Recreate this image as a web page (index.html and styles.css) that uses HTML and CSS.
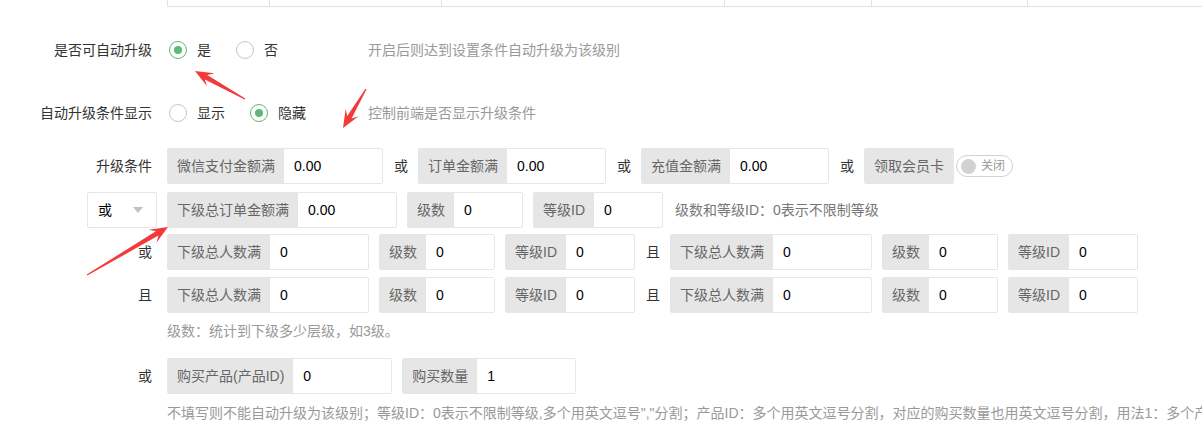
FILE: index.html
```html
<!DOCTYPE html>
<html>
<head>
    <meta charset="utf-8">
    <title>会员等级 - 自动升级设置</title>
    <link rel="stylesheet" href="styles.css">
</head>
<body>
    <div class="page">
        <!-- 上面等级列表的底边 -->
        <div class="tbl-tail">
            <span class="tbl-tail__cell tbl-tail__cell--1"></span>
            <span class="tbl-tail__cell tbl-tail__cell--2"></span>
            <span class="tbl-tail__cell tbl-tail__cell--3"></span>
            <span class="tbl-tail__cell tbl-tail__cell--4"></span>
            <span class="tbl-tail__cell tbl-tail__cell--5"></span>
        </div>

        <div class="form-item form-item--auto">
            <label class="form-label">是否可自动升级</label>
            <div class="radios">
                <span class="radio radio--on"><i class="radio__icon"></i>是</span>
                <span class="radio"><i class="radio__icon"></i>否</span>
            </div>
            <div class="form-tip">开启后则达到设置条件自动升级为该级别</div>
        </div>

        <div class="form-item form-item--show">
            <label class="form-label">自动升级条件显示</label>
            <div class="radios">
                <span class="radio"><i class="radio__icon"></i>显示</span>
                <span class="radio radio--on"><i class="radio__icon"></i>隐藏</span>
            </div>
            <div class="form-tip">控制前端是否显示升级条件</div>
        </div>

        <div class="cond cond--first">
            <label class="form-label">升级条件</label>
            <div class="ig"><span class="ig__addon">微信支付金额满</span><input class="ig__input" value="0.00"></div>
            <span class="conj">或</span>
            <div class="ig"><span class="ig__addon">订单金额满</span><input class="ig__input" value="0.00"></div>
            <span class="conj">或</span>
            <div class="ig"><span class="ig__addon">充值金额满</span><input class="ig__input" value="0.00"></div>
            <span class="conj">或</span>
            <div class="ig"><span class="ig__addon">领取会员卡</span></div>
            <div class="switch">关闭</div>
        </div>

        <div class="cond cond--team">
            <div class="form-label form-label--sel">
                <div class="sel">或</div>
            </div>
            <div class="ig"><span class="ig__addon">下级总订单金额满</span><input class="ig__input" value="0.00"></div>
            <div class="ig"><span class="ig__addon">级数</span><input class="ig__input ig__input--sm" value="0"></div>
            <div class="ig"><span class="ig__addon">等级ID</span><input class="ig__input ig__input--sm" value="0"></div>
            <span class="cond__tip">级数和等级ID：0表示不限制等级</span>
        </div>

        <div class="cond cond--people">
            <label class="form-label">或</label>
            <div class="ig"><span class="ig__addon">下级总人数满</span><input class="ig__input" value="0"></div>
            <div class="ig"><span class="ig__addon">级数</span><input class="ig__input ig__input--sm" value="0"></div>
            <div class="ig"><span class="ig__addon">等级ID</span><input class="ig__input ig__input--sm" value="0"></div>
            <span class="conj">且</span>
            <div class="ig"><span class="ig__addon">下级总人数满</span><input class="ig__input" value="0"></div>
            <div class="ig"><span class="ig__addon">级数</span><input class="ig__input ig__input--sm" value="0"></div>
            <div class="ig"><span class="ig__addon">等级ID</span><input class="ig__input ig__input--sm" value="0"></div>
        </div>

        <div class="cond cond--people2">
            <label class="form-label">且</label>
            <div class="ig"><span class="ig__addon">下级总人数满</span><input class="ig__input" value="0"></div>
            <div class="ig"><span class="ig__addon">级数</span><input class="ig__input ig__input--sm" value="0"></div>
            <div class="ig"><span class="ig__addon">等级ID</span><input class="ig__input ig__input--sm" value="0"></div>
            <span class="conj">且</span>
            <div class="ig"><span class="ig__addon">下级总人数满</span><input class="ig__input" value="0"></div>
            <div class="ig"><span class="ig__addon">级数</span><input class="ig__input ig__input--sm" value="0"></div>
            <div class="ig"><span class="ig__addon">等级ID</span><input class="ig__input ig__input--sm" value="0"></div>
        </div>

        <div class="form-note form-note--level">级数：统计到下级多少层级，如3级。</div>

        <div class="cond cond--goods">
            <label class="form-label">或</label>
            <div class="ig"><span class="ig__addon">购买产品(产品ID)</span><input class="ig__input" value="0"></div>
            <div class="ig"><span class="ig__addon">购买数量</span><input class="ig__input" value="1"></div>
        </div>

        <div class="form-note form-note--last">不填写则不能自动升级为该级别；等级ID：0表示不限制等级,多个用英文逗号","分割；产品ID：多个用英文逗号分割，对应的购买数量也用英文逗号分割，用法1：多个产品ID用英文逗号分割，购买任意一个即可升级</div>

        <!-- 截图里的标注箭头 -->
        <svg class="marks" width="1202" height="427" viewBox="0 0 1202 427">
            <polygon points="245.3,98.5 207.2,75 214.4,73.3 195,71 207,86.3 204.8,79.4 244.7,99.5"/>
            <polygon points="365.5,88.7 347.2,115.9 345.7,108.7 343,128 358.6,116.3 351.6,118.5 366.5,89.3"/>
            <polygon points="87.3,275.5 158.5,235.6 156.3,242.7 168,227 148.7,229.8 155.9,231.3 86.7,274.5"/>
        </svg>
    </div>
</body>
</html>
```

FILE: styles.css
```css
* {
    margin: 0;
    padding: 0;
    box-sizing: border-box;
}
html, body {
    background: #fff;
}
body {
    width: 1202px;
    height: 427px;
    overflow: hidden;
    font: 14px/20px "Liberation Sans", "Noto Sans CJK SC", sans-serif;
    color: #333;
}
.page {
    position: relative;
    height: 427px;
    overflow: hidden;
}

/* 表格底边 */
.tbl-tail {
    display: flex;
    margin-left: 167px;
    height: 7px;
    border-bottom: 1px solid #e2e2e2;
}
.tbl-tail__cell {
    border-left: 1px solid #e2e2e2;
}
.tbl-tail__cell--1 { width: 102px; }
.tbl-tail__cell--2 { width: 172px; }
.tbl-tail__cell--3 { width: 283px; }
.tbl-tail__cell--4 { width: 147px; }
.tbl-tail__cell--5 {
    width: 157px;
    border-right: 1px solid #e2e2e2;
}

.form-item {
    display: flex;
    align-items: center;
    height: 38px;
}
.form-item--auto {
    margin-top: 24px;
}
.form-item--show {
    margin-top: 25px;
}
.form-label {
    flex: none;
    width: 152px;
    margin-right: 15px;
    text-align: right;
    color: #333;
}
.form-tip {
    color: #999;
}

/* 单选 */
.radios {
    display: flex;
    align-items: center;
    width: 201px;
    padding-left: 2px;
}
.radio {
    display: flex;
    align-items: center;
    margin-right: 25px;
    color: #333;
}
.radio__icon {
    display: flex;
    align-items: center;
    justify-content: center;
    width: 18px;
    height: 18px;
    margin-right: 10px;
    border: 1px solid #c6c6c6;
    border-radius: 50%;
}
.radio--on .radio__icon {
    border-color: #5fb878;
}
.radio--on .radio__icon::after {
    content: '';
    width: 8px;
    height: 8px;
    border-radius: 50%;
    background: #5fb878;
}

/* 升级条件 */
.cond {
    display: flex;
    align-items: center;
    height: 36px;
}
.cond--first { margin-top: 16px; }
.cond--team { margin-top: 8px; }
.cond--people { margin-top: 6px; }
.cond--people2 { margin-top: 7px; }
.cond--goods { margin-top: 17px; }

.ig {
    display: flex;
    flex: none;
    height: 36px;
    margin-right: 10px;
    border: 1px solid #e6e6e6;
    border-radius: 2px;
    background: #fff;
}
.ig__addon {
    padding: 0 9px;
    line-height: 34px;
    white-space: nowrap;
    color: #666;
    background: #e6e6e6;
}
.ig__input {
    width: 98px;
    height: 34px;
    padding: 0 10px;
    border: 0;
    outline: none;
    font: inherit;
    color: #000;
    background: #fff;
}
.ig__input--sm {
    width: 68px;
}
.conj {
    margin-left: 1px;
    margin-right: 10px;
    color: #333;
}
.cond__tip {
    margin-left: 2px;
    color: #777;
}

/* 下拉框 */
.form-label--sel {
    display: flex;
    justify-content: flex-end;
    width: 157px;
    margin-right: 10px;
}
.sel {
    display: flex;
    align-items: center;
    justify-content: space-between;
    width: 70px;
    height: 36px;
    padding: 0 13px 0 10px;
    border: 1px solid #e6e6e6;
    border-radius: 2px;
    color: #000;
}
.sel::after {
    content: '';
    border-top: 6px solid #c2c2c2;
    border-left: 5px solid transparent;
    border-right: 5px solid transparent;
}

/* 开关 */
.switch {
    display: flex;
    align-items: center;
    width: 57px;
    height: 22px;
    margin-left: -8px;
    padding: 0 4px;
    border: 1px solid #d2d2d2;
    border-radius: 20px;
    font-size: 12px;
    color: #999;
}
.switch::before {
    content: '';
    width: 15px;
    height: 15px;
    margin-right: 5px;
    border-radius: 50%;
    background: #d2d2d2;
}

.form-note {
    margin-left: 167px;
    white-space: nowrap;
    color: #999;
}
.form-note--level { margin-top: 8px; }
.form-note--last { margin-top: 9px; }

.marks {
    position: absolute;
    top: 0;
    left: 0;
    pointer-events: none;
    fill: #f23a3a;
}
```
